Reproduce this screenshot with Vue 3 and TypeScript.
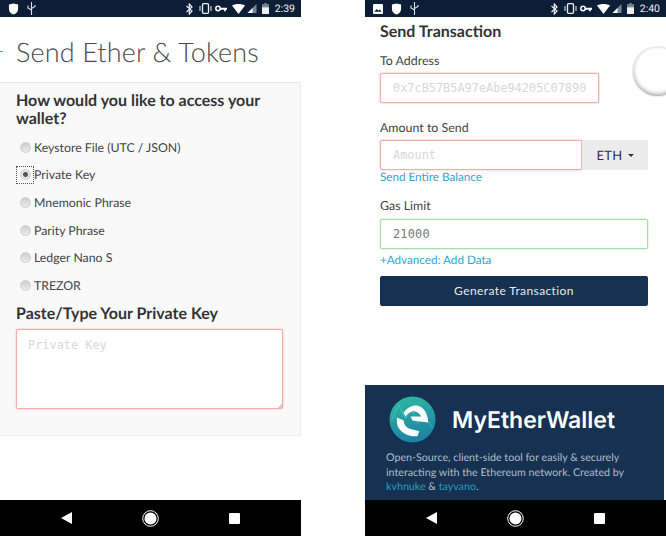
<template>
  <div class="screens">
    <section class="phone">
      <div class="status">
        <div class="status-left">
          <svg width="11" height="12" viewBox="0 0 12 13"><path d="M1 1.500 6 .5l5 1v5c0 3-2.200 5-5 6-2.800-1-5-3-5-6z" fill="#fff" /></svg>
          <svg width="9" height="13" viewBox="0 0 9 13"><path d="M4.500 0v13M1 3.500v2.500l3.500 2M8 3v1.500L4.500 6.500" stroke="#dfe3e8" fill="none" stroke-width="1.100" /></svg>
        </div>
        <div class="status-right">
          <svg class="bt" width="7" height="12" viewBox="0 0 7 12"><path d="M.5 3 6 8 3.300 11V1L6 4 .5 9" stroke="#eee" fill="none" stroke-width="1.200" /></svg>
          <svg width="13" height="11" viewBox="0 0 13 11"><rect x="3.500" y=".7" width="6" height="9.600" rx="1" stroke="#eee" fill="none" stroke-width="1.300" /><path d="M1 3v5M12 3v5" stroke="#eee" /></svg>
          <svg class="key" width="12" height="7" viewBox="0 0 12 7"><circle cx="3" cy="3.500" r="2.200" stroke="#fff" fill="none" stroke-width="1.500" /><path d="M5 2.800h7v2h-1.200v1.400H9V4.800H5z" fill="#fff" /></svg>
          <svg width="13" height="10" viewBox="0 0 13 10"><path d="M0 1.500C3.500-.5 9.500-.5 13 1.500L6.500 10z" fill="#fff" /></svg>
          <svg class="sig" width="10" height="9" viewBox="0 0 9 9"><path d="M9 0v9H0z" fill="#7b8591" /><path d="M5 4v5H0z" fill="#fff" /></svg>
          <svg width="7" height="11" viewBox="0 0 7 11"><rect x="2.300" width="2.400" height="1.500" fill="#7b8591" /><rect y="1.200" width="7" height="3" fill="#7b8591" /><rect y="4.200" width="7" height="6.800" fill="#eee" /></svg>
          <span class="time">2:39</span>
        </div>
      </div>

      <div class="title-row">
        <span class="dash"></span>
        <h1>Send Ether &amp; Tokens</h1>
      </div>

      <div class="panel">
        <h3 class="access">How would you like to access your wallet?</h3>
        <label v-for="opt in options" :key="opt" class="radio" :class="{ focused: opt === selected }">
          <span class="radio-box"><input type="radio" name="access" :value="opt" v-model="selected" /></span>
          {{ opt }}
        </label>
        <h3 class="paste">Paste/Type Your Private Key</h3>
        <textarea class="bad" placeholder="Private Key"></textarea>
      </div>

      <div class="spacer"></div>
      <div class="nav">
        <svg width="11" height="12" viewBox="0 0 11 12"><path d="M11 0v12L0 6z" fill="#fff" /></svg>
        <svg width="17" height="17" viewBox="0 0 17 17"><circle cx="8.500" cy="8.500" r="7.800" stroke="#fff" fill="none" /><circle cx="8.500" cy="8.500" r="6" fill="#fff" /></svg>
        <span class="square"></span>
      </div>
    </section>

    <section class="phone">
      <div class="status">
        <div class="status-left">
          <svg width="10" height="10" viewBox="0 0 11 11"><rect width="11" height="11" rx="1" fill="#fff" /><path d="M1.500 8.500 4 5.500l2 2 1.500-1.500 2 2.500z" fill="#0c1e35" /></svg>
          <svg width="11" height="12" viewBox="0 0 12 13"><path d="M1 1.500 6 .5l5 1v5c0 3-2.200 5-5 6-2.800-1-5-3-5-6z" fill="#fff" /></svg>
          <svg width="9" height="13" viewBox="0 0 9 13"><path d="M4.500 0v13M1 3.500v2.500l3.500 2M8 3v1.500L4.500 6.500" stroke="#dfe3e8" fill="none" stroke-width="1.100" /></svg>
        </div>
        <div class="status-right">
          <svg class="bt" width="7" height="12" viewBox="0 0 7 12"><path d="M.5 3 6 8 3.300 11V1L6 4 .5 9" stroke="#eee" fill="none" stroke-width="1.200" /></svg>
          <svg width="13" height="11" viewBox="0 0 13 11"><rect x="3.500" y=".7" width="6" height="9.600" rx="1" stroke="#eee" fill="none" stroke-width="1.300" /><path d="M1 3v5M12 3v5" stroke="#eee" /></svg>
          <svg class="key" width="12" height="7" viewBox="0 0 12 7"><circle cx="3" cy="3.500" r="2.200" stroke="#fff" fill="none" stroke-width="1.500" /><path d="M5 2.800h7v2h-1.200v1.400H9V4.800H5z" fill="#fff" /></svg>
          <svg width="13" height="10" viewBox="0 0 13 10"><path d="M0 1.500C3.500-.5 9.500-.5 13 1.500L6.500 10z" fill="#fff" /></svg>
          <svg class="sig" width="10" height="9" viewBox="0 0 9 9"><path d="M9 0v9H0z" fill="#7b8591" /><path d="M5 4v5H0z" fill="#fff" /></svg>
          <svg width="7" height="11" viewBox="0 0 7 11"><rect x="2.300" width="2.400" height="1.500" fill="#7b8591" /><rect y="1.200" width="7" height="3" fill="#7b8591" /><rect y="4.200" width="7" height="6.800" fill="#eee" /></svg>
          <span class="time">2:40</span>
        </div>
      </div>

      <div class="form">
        <h3 class="send">Send Transaction</h3>
        <label class="field-label to-label">To Address</label>
        <input class="bad to" placeholder="0x7cB57B5A97eAbe94205C07890" />
        <label class="field-label amount-label">Amount to Send</label>
        <div class="amount-row">
          <input class="bad amount" placeholder="Amount" />
          <div class="unit">ETH <span class="caret"></span></div>
        </div>
        <a class="link entire">Send Entire Balance</a>
        <label class="field-label gas-label">Gas Limit</label>
        <input class="good" value="21000" />
        <a class="link advanced">+Advanced: Add Data</a>
        <button class="generate">Generate Transaction</button>
      </div>

      <div class="spacer"></div>
      <footer class="foot">
        <div class="brand">
          <svg width="47" height="47" viewBox="0 0 48 48">
            <defs>
              <linearGradient id="mew" x1="0.300" y1="0" x2="0.600" y2="1">
                <stop offset="0" stop-color="#2bb8a0" />
                <stop offset="1" stop-color="#1d7fa6" />
              </linearGradient>
            </defs>
            <circle cx="24" cy="24" r="23.500" fill="url(#mew)" />
            <path d="M3 24 10 9l7 14 6-12 6 17 6-10 9 14" stroke="#8fd6d0" stroke-opacity=".45" fill="none" />
            <path d="M15 17C19 11 25 9 30 10 36 12 40 19 40 27L24 25 22 21H33C30 16 26 15 23 16 20 17 18 19 17 21z" fill="#fff" />
            <path d="M8 22 15 25C15 29 18 33 23 34L31 36 29 41C22 42 14 39 10 33 8 30 8 26 8 22z" fill="#fff" />
          </svg>
          <span class="brand-name">MyEtherWallet</span>
        </div>
        <p>
          Open-Source, client-side tool for easily &amp; securely interacting with the Ethereum network. Created by
          <a>kvhnuke</a> &amp; <a>tayvano</a>.
        </p>
      </footer>
      <div class="nav">
        <svg width="11" height="12" viewBox="0 0 11 12"><path d="M11 0v12L0 6z" fill="#fff" /></svg>
        <svg width="17" height="17" viewBox="0 0 17 17"><circle cx="8.500" cy="8.500" r="7.800" stroke="#fff" fill="none" /><circle cx="8.500" cy="8.500" r="6" fill="#fff" /></svg>
        <span class="square"></span>
      </div>
      <span class="float-btn"></span>
    </section>
  </div>
</template>

<script setup lang="ts">
import { ref } from 'vue';

const options: string[] = [
  'Keystore File (UTC / JSON)',
  'Private Key',
  'Mnemonic Phrase',
  'Parity Phrase',
  'Ledger Nano S',
  'TREZOR',
];

const selected = ref<string>('Private Key');
</script>

<style>
html, body {
  margin: 0;
  background: #fff;
}
</style>

<style scoped>
.screens {
  display: flex;
  gap: 64px;
  width: 666px;
  height: 536px;
  overflow: hidden;
  font-family: Lato, "Open Sans", sans-serif;
  color: #333;
  text-rendering: geometricPrecision;
}
.phone {
  position: relative;
  flex: 0 0 301px;
  height: 536px;
  display: flex;
  flex-direction: column;
  background: #fff;
}
.status {
  flex: 0 0 17px;
  background: #0c1e35;
  display: flex;
  justify-content: space-between;
  align-items: center;
  padding: 0 6px 0 8px;
}
.status-left, .status-right {
  display: flex;
  align-items: center;
}
.status-left {
  gap: 8px;
}
.status-right {
  gap: 5px;
}
.bt {
  margin-right: 1px;
}
.key {
  margin-left: -2px;
}
.sig {
  margin-left: -3px;
}
.time {
  color: #eee;
  font-family: Roboto, sans-serif;
  font-size: 10.500px;
  margin-left: 1px;
}
.title-row {
  flex: 0 0 65px;
  box-sizing: border-box;
  padding-top: 4px;
  display: flex;
  align-items: center;
  gap: 13px;
}
.dash {
  width: 3px;
  height: 1px;
  background: #2fa9d0;
}
h1 {
  margin: 0;
  font-size: 27px;
  font-weight: 300;
  letter-spacing: .15px;
  color: #4a4a4a;
}
h3 {
  margin: 0;
  font-weight: 700;
  font-size: 16px;
  color: #333;
}
.panel {
  flex: 0 0 354px;
  box-sizing: border-box;
  background: #f9f9f9;
  border-top: 1px solid #e8e8e8;
  border-right: 1px solid #eee;
  border-bottom: 1px solid #eee;
  padding: 9px 17px 0 16px;
}
.access {
  line-height: 18px;
  margin-bottom: 5.500px;
}
.radio {
  display: flex;
  align-items: center;
  height: 27.600px;
  font-size: 12.300px;
  color: #444;
}
.radio-box {
  width: 18px;
  height: 18px;
  box-sizing: border-box;
  display: flex;
  align-items: center;
  justify-content: center;
  border: 1px dotted transparent;
}
.radio.focused .radio-box {
  border-color: #555;
}
.radio input {
  appearance: none;
  width: 11px;
  height: 11px;
  margin: 0;
  border-radius: 50%;
  background: linear-gradient(#cdcdcd, #ededed);
  border: 1px solid #cfcfcf;
}
.radio input:checked {
  background: radial-gradient(circle, #555 0 2px, #e6e6e6 3px);
}
.paste {
  margin-top: 4.500px;
  margin-bottom: 5px;
  line-height: 20px;
}
textarea, input:not([type="radio"]) {
  font-family: "DejaVu Sans Mono", monospace;
  font-size: 11.900px;
  box-sizing: border-box;
  background: #fff;
  border-radius: 2px;
  outline: none;
  color: #777;
}
::placeholder {
  color: #d8d8d8;
  opacity: 1;
}
textarea {
  display: block;
  width: 267px;
  height: 80px;
  padding: 8px 11px;
}
textarea::-webkit-resizer {
  background: linear-gradient(135deg, transparent 85%, #ccc 85%);
}
.bad {
  border: 1px solid #f8aca7;
  box-shadow: 0 0 2px #f8aca7;
}
.good {
  display: block;
  width: 268px;
  height: 30px;
  border: 1px solid #a8dfa6;
  box-shadow: 0 0 2px #a8dfa6;
  padding: 0 12px;
  letter-spacing: .2px;
}
.spacer {
  flex: 1;
}
.nav {
  flex: 0 0 36px;
  background: #000;
  display: flex;
  align-items: center;
  justify-content: space-between;
  padding: 0 61px;
}
.square {
  width: 11px;
  height: 11px;
  background: #fff;
  border-radius: 1px;
}
.form {
  padding: 6px 18px 0 15px;
}
.send {
  line-height: 18px;
}
.field-label {
  display: block;
  font-size: 12.400px;
  line-height: 16px;
  color: #444;
}
.to-label {
  margin-top: 12px;
  margin-bottom: 4px;
}
input.to {
  display: block;
  width: 219px;
  height: 30px;
  padding: 0 10px 0 12px;
}
.amount-label {
  margin-top: 17px;
  margin-bottom: 4px;
}
.amount-row {
  display: flex;
  width: 268px;
  height: 30px;
}
input.amount {
  width: 202px;
  height: 30px;
  padding: 0 12px;
  border-radius: 2px 0 0 2px;
}
.unit {
  flex: 1;
  background: #ececec;
  border-radius: 0 2px 2px 0;
  display: flex;
  align-items: center;
  justify-content: center;
  gap: 5px;
  font-size: 13px;
  letter-spacing: .3px;
}
.caret {
  width: 0;
  height: 0;
  border-left: 3px solid transparent;
  border-right: 3px solid transparent;
  border-top: 3px solid #333;
}
.link {
  display: block;
  color: #2aa8cc;
  font-size: 11.700px;
  line-height: 16px;
}
.entire {
  margin-top: -1px;
}
.gas-label {
  margin-top: 13px;
  margin-bottom: 5px;
}
.advanced {
  margin-top: 3px;
}
.generate {
  display: block;
  width: 268px;
  height: 30px;
  margin-top: 8px;
  padding: 0 0 2px;
  background: #163151;
  color: #e8ebee;
  border: none;
  border-radius: 2px;
  font-family: inherit;
  font-size: 12px;
  letter-spacing: .4px;
}
.foot {
  flex: 0 0 115px;
  box-sizing: border-box;
  width: 299px;
  background: #163151;
  padding: 11px 15px 0 21px;
  color: #b3bcc7;
}
.brand {
  display: flex;
  align-items: center;
  gap: 16px;
  margin-left: 3px;
}
.brand-name {
  font-family: Inter, Lato, sans-serif;
  font-size: 23px;
  font-weight: 600;
  color: #fff;
}
.foot p {
  margin: 8px 0 0;
  font-size: 10.700px;
  line-height: 14.500px;
}
.foot a {
  color: #2a9dbd;
}
.float-btn {
  position: absolute;
  left: 268px;
  top: 47px;
  width: 49px;
  height: 49px;
  border-radius: 50%;
  background: #fff;
  box-shadow: inset 0 -2px 4px #aaa, 0 0 2px #bbb;
}
</style>
